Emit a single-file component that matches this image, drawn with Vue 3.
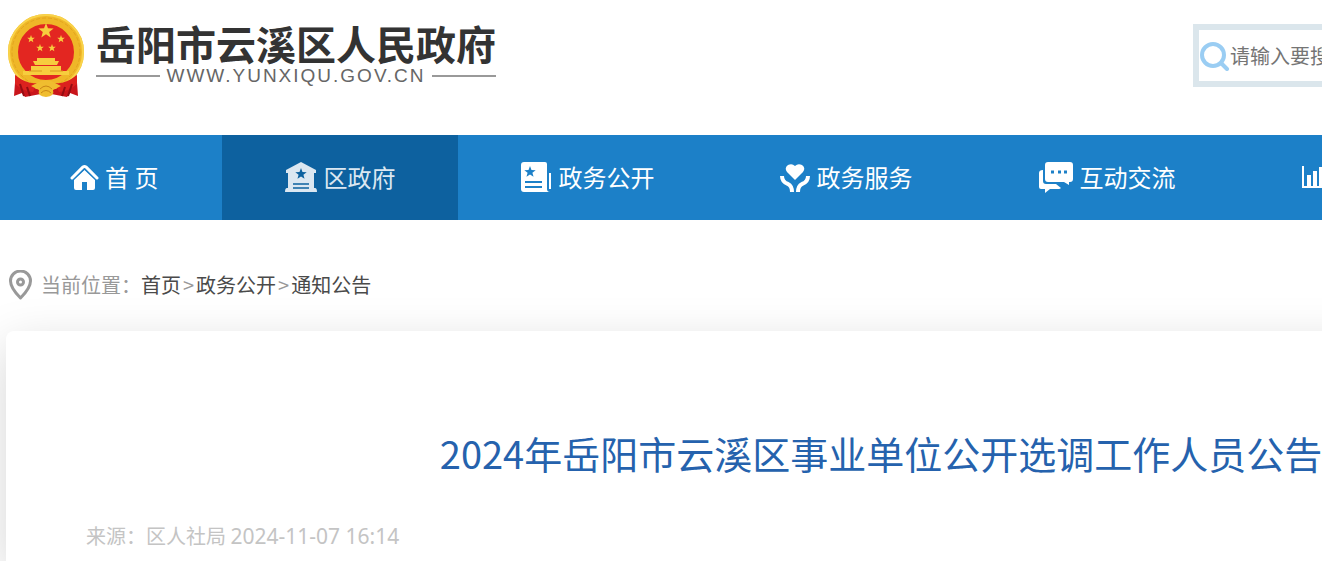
<template>
  <div class="page">
    <header class="header">
      <a class="brand" href="#">
        <svg class="emblem" viewBox="0 0 78 85" aria-hidden="true">
          <path d="M9 56 L7 83 L15 80 L18 84 L39 80 L60 84 L63 80 L71 83 L69 56 Z" fill="#c9151b" />
          <circle cx="39" cy="39" r="33" fill="#e32621" stroke="#efb728" stroke-width="10" />
          <circle cx="39" cy="39" r="37" fill="none" stroke="#f9d34a" stroke-width="2" />
          <circle cx="39" cy="39" r="34" fill="none" stroke="#e2a51f" stroke-width="1" stroke-dasharray="4 2" />
          <g fill="#f7cd3e">
            <path :d="star(39, 18, 8)" />
            <path :d="star(24, 26, 4)" />
            <path :d="star(54, 26, 4)" />
            <path :d="star(33, 35, 4)" />
            <path :d="star(45, 35, 4)" />
            <path d="M30 45 H48 V48 H52 L50 52 H28 L26 48 H30 Z" />
            <path d="M24 53 H54 V58 H62 V62 H16 V58 H24 Z" />
          </g>
          <path d="M22 58 H35 M43 58 H56" stroke="#d99a1e" stroke-width="1" />
          <path d="M8 62 Q21 72 30 70 L26 79 Q16 78 8 71 Z M70 62 Q57 72 48 70 L52 79 Q62 78 70 71 Z" fill="#dc211e" />
          <path d="M13 71 L17 83 M20 74 L23 83 M65 71 L61 83 M58 74 L55 83" stroke="#930d13" stroke-width="2" />
          <path d="M30 70 Q39 64 48 70 L54 73 L46 77 Q48 83 39 84 Q30 83 32 77 L24 73 Z" fill="#f0bd2f" />
          <path d="M33 76 Q39 70 45 76 M34 80 Q39 75 44 80" fill="none" stroke="#c98616" stroke-width="1" />
        </svg>
        <span class="brand-text">
          <span class="brand-name">岳阳市云溪区人民政府</span>
          <span class="brand-url">WWW.YUNXIQU.GOV.CN</span>
        </span>
      </a>
      <form class="search" role="search" @submit.prevent>
        <svg class="search-icon" viewBox="0 0 30 30" aria-hidden="true">
          <circle cx="13" cy="14" r="11" fill="none" stroke="#9acdf3" stroke-width="4" />
          <path d="M21 22 L27 28" stroke="#9acdf3" stroke-width="4" stroke-linecap="round" />
        </svg>
        <input v-model="keyword" type="text" aria-label="搜索" placeholder="请输入要搜索的内容">
      </form>
    </header>

    <nav class="nav">
      <a
        v-for="item in menu"
        :key="item.icon"
        href="#"
        class="nav-item"
        :class="{ active: item.icon === 'hall' }"
        :aria-label="item.label || '数据'"
      >
        <svg v-if="item.icon === 'home'" class="icon-home" viewBox="0 0 29 28">
          <path d="M2 15 L13 4 Q14.500 3 16 4 L27 15" fill="none" stroke="currentColor" stroke-width="3" stroke-linecap="round" />
          <path d="M14.500 7 L25 17 V25 Q25 27 23 27 H17 V19 H12 V27 H6 Q4 27 4 25 V17 Z" fill="currentColor" />
          <path d="M3 17 L14.500 6 L26 17" fill="none" stroke="#1c80c8" stroke-width="1" />
        </svg>
        <svg v-else-if="item.icon === 'hall'" class="icon-hall" viewBox="0 0 32 32">
          <path d="M16 1 L31 9 V12 H29 V27 H30 Q32 27 32 31 H0 Q0 27 2 27 H3 V12 H1 V9 Z" fill="currentColor" />
          <path :d="star(16, 13, 6)" fill="#0d619f" />
          <path d="M8 23 H24 M8 27 H24" stroke="#0d619f" stroke-width="1.500" />
        </svg>
        <svg v-else-if="item.icon === 'paper'" class="icon-paper" viewBox="0 0 31 32">
          <path d="M3 1 H24 Q26 1 26 3 V28 Q26 31 29 31 H3 Q0 31 0 28 V4 Q0 1 3 1 Z" fill="currentColor" />
          <path d="M29 12 V28" stroke="currentColor" stroke-width="2" />
          <path :d="star(9, 11, 6)" fill="#1c80c8" />
          <path d="M4 21 H21 M4 26 H21" stroke="#1c80c8" stroke-width="2" />
        </svg>
        <svg v-else-if="item.icon === 'heart'" class="icon-heart" viewBox="0 0 30 32">
          <path d="M15 19 L7 11 Q4 7 8 4 Q12 2 15 5 Q18 2 22 4 Q26 7 23 11 Z" fill="currentColor" />
          <path d="M2 15 Q2 21 8 23 Q12 25 12 31 M28 15 Q28 21 22 23 Q18 25 18 31" fill="none" stroke="currentColor" stroke-width="4" />
        </svg>
        <svg v-else-if="item.icon === 'chat'" class="icon-chat" viewBox="0 0 35 32">
          <path d="M10 1 H32 Q35 1 35 4 V18 Q35 21 32 21 H31 V24 L26 21 H10 Q7 21 7 18 V4 Q7 1 10 1 Z" fill="currentColor" />
          <path d="M5 9 V20 Q5 23 8 23 H18 L23 27 Q22 28 21 28 H12 L7 32 V28 H3 Q1 28 1 26 V12 Q1 9 5 9 Z" fill="currentColor" />
          <path d="M13 11 H16 M20 11 H23 M26 11 H29" stroke="#1c80c8" stroke-width="3" />
        </svg>
        <svg v-else class="icon-chart" viewBox="0 0 32 32">
          <path d="M2 5 V26 H32" fill="none" stroke="currentColor" stroke-width="2" />
          <path d="M8 25 V14 M14 25 V10 M20 25 V6 M26 25 V12" stroke="currentColor" stroke-width="4" />
        </svg>
        <span v-if="item.label">{{ item.label }}</span>
      </a>
    </nav>

    <main class="main">
      <div class="crumbs">
        <svg class="pin" viewBox="0 0 24 30" aria-hidden="true">
          <path d="M12 28 Q2 18 2 11 A10 10 0 0 1 22 11 Q22 18 12 28 Z" fill="none" stroke="#999" stroke-width="3" stroke-linejoin="round" />
          <circle cx="12" cy="12" r="3" fill="none" stroke="#999" stroke-width="3" />
        </svg>
        <span>当前位置：</span>
        <template v-for="(crumb, index) in crumbs" :key="crumb">
          <span v-if="index > 0" class="arrow">&gt;</span>
          <a href="#">{{ crumb }}</a>
        </template>
      </div>

      <article class="card">
        <h1 class="title">2024年岳阳市云溪区事业单位公开选调工作人员公告</h1>
        <p class="meta">来源：区人社局 <time datetime="2024-11-07T16:14">2024-11-07 16:14</time></p>
      </article>
    </main>
  </div>
</template>

<script setup>
import { ref } from 'vue'

const keyword = ref('')

const menu = [
  { icon: 'home', label: '首 页' },
  { icon: 'hall', label: '区政府' },
  { icon: 'paper', label: '政务公开' },
  { icon: 'heart', label: '政务服务' },
  { icon: 'chat', label: '互动交流' },
  { icon: 'chart', label: '' }
]

const crumbs = ['首页', '政务公开', '通知公告']

// five-pointed star centred on cx, cy
function star(cx, cy, r) {
  const points = []
  for (let i = 0; i < 10; i++) {
    const radius = i % 2 ? r * 0.42 : r
    const angle = (Math.PI / 5) * i - Math.PI / 2
    points.push(`${(cx + radius * Math.cos(angle)).toFixed(2)} ${(cy + radius * Math.sin(angle)).toFixed(2)}`)
  }
  return `M${points.join('L')}Z`
}
</script>

<style>
body {
  margin: 0;
  background: #fff;
}
</style>

<style scoped>
.page {
  display: flex;
  flex-direction: column;
  min-height: 100vh;
  overflow: hidden;
  font-family: "Noto Sans CJK SC", sans-serif;
  font-size: 20px;
}

a {
  color: inherit;
  text-decoration: none;
}

svg {
  display: block;
  flex: none;
}

.header {
  display: flex;
  justify-content: space-between;
  align-items: flex-start;
  box-sizing: border-box;
  min-width: 1762px;
  padding: 13px 6px 37px;
}

.brand {
  display: flex;
  gap: 10px;
}

.emblem {
  width: 80px;
  height: 85px;
}

.brand-text {
  display: flex;
  flex-direction: column;
  gap: 2px;
  padding-top: 10px;
}

.brand-name {
  font-size: 40px;
  line-height: 40px;
  font-weight: 700;
  color: #333;
}

.brand-url {
  display: flex;
  align-items: center;
  gap: 6px;
  font-family: "Liberation Sans", sans-serif;
  font-size: 19px;
  line-height: 22px;
  letter-spacing: 2px;
  color: #666;
}

.brand-url::before,
.brand-url::after {
  content: '';
  flex: 1;
  height: 2px;
  background: #999;
}

.search {
  display: flex;
  align-items: center;
  box-sizing: border-box;
  width: 563px;
  height: 63px;
  margin-top: 11px;
  border: 6px solid #dbe6ec;
}

.search-icon {
  width: 30px;
  height: 30px;
  margin-left: 1px;
}

.search input {
  flex: 1;
  min-width: 0;
  padding: 0;
  border: 0;
  outline: 0;
  background: none;
  font: inherit;
  color: #333;
}

.search input::placeholder {
  color: #757575;
}

.nav {
  display: flex;
  height: 85px;
  background: #1c80c8;
}

.nav-item {
  display: flex;
  flex: none;
  align-items: center;
  gap: 6px;
  padding: 0 63px 2px;
  font-size: 24px;
  line-height: 36px;
  white-space: nowrap;
  color: #fff;
}

.nav-item:first-child {
  padding-left: 70px;
  padding-right: 64px;
}

.nav-item.active {
  background: #0d619f;
  color: #dbe7f1;
}

.icon-home {
  width: 29px;
  height: 28px;
}

.icon-hall,
.icon-chart {
  width: 32px;
  height: 32px;
}

.icon-paper {
  width: 31px;
  height: 32px;
}

.icon-heart {
  width: 30px;
  height: 32px;
}

.icon-chat {
  width: 35px;
  height: 32px;
}

.main {
  display: flex;
  flex: 1;
  flex-direction: column;
  box-sizing: border-box;
  min-width: 1762px;
  padding: 0 6px;
}

.crumbs {
  display: flex;
  align-items: center;
  padding: 50px 2px 31px;
  line-height: 30px;
  color: #999;
}

.crumbs a {
  color: #4a4a4a;
}

.pin {
  width: 25px;
  height: 30px;
  margin-right: 8px;
}

.arrow {
  padding: 0 2px;
}

.card {
  flex: 1;
  padding: 92px 80px 0;
  border-radius: 8px 8px 0 0;
  background: #fff;
  box-shadow: 0 15px 50px rgba(0, 0, 0, 0.17);
}

.title {
  margin: 0;
  font-size: 38px;
  line-height: 60px;
  font-weight: 400;
  text-align: center;
  color: #2562ad;
}

.meta {
  margin: 38px 0 0;
  line-height: 30px;
  color: #c4c4c4;
}

.meta time {
  font-family: "Noto Sans", sans-serif;
  font-size: 21px;
}
</style>
